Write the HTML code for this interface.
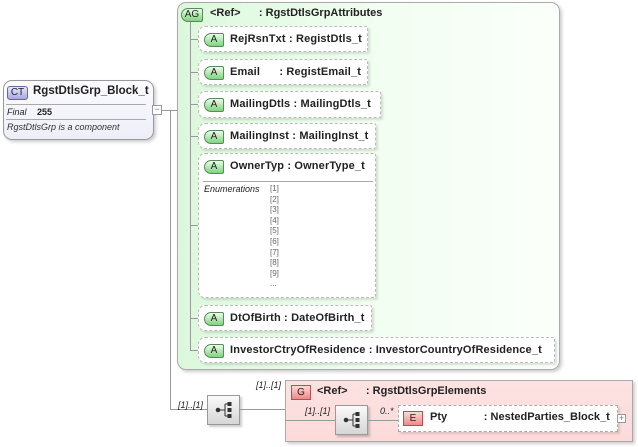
<!DOCTYPE html>
<html><head><style>
*{margin:0;padding:0;box-sizing:border-box}
body{width:638px;height:447px;background:#fff;position:relative;overflow:hidden;font-family:"Liberation Sans",sans-serif;font-size:11px;color:#222}
.a{position:absolute}
.attr{position:absolute;left:198px;border:1px dashed #bbb;border-radius:7px 2px 2px 7px;background:#fff;box-shadow:2px 2px 2px rgba(0,0,0,.12)}
.attr .t{position:absolute;left:31px;top:6px;font-weight:bold;font-size:11px;white-space:pre;letter-spacing:0.15px}
.badge{position:absolute;left:5px;top:6px;width:20px;height:14px;border:1px solid #5a8a5a;border-radius:7px 2px 2px 7px;background:linear-gradient(#e8ffe8,#7fd27f);font-size:10px;text-align:center;line-height:12px;color:#222}
.hl{position:absolute;height:1px;background:#999}
.vl{position:absolute;width:1px;background:#999}
.seq{position:absolute;width:33px;height:30px;border:1px solid #999;background:linear-gradient(#fafafa,#d6d6d6);box-shadow:2px 2px 2px rgba(0,0,0,.2)}
.i{font-style:italic;font-size:9px;position:absolute;white-space:pre}
</style></head><body>
<div class="a" style="left:3px;top:80px;width:151px;height:60px;border:1px solid #999;border-radius:9px;background:linear-gradient(#fbfbff,#eeeef8);box-shadow:2px 2px 3px rgba(0,0,0,.2)"></div>
<div class="a" style="left:7px;top:86px;width:21px;height:14px;border:1px solid #66a;border-radius:3px;background:linear-gradient(#e6e6ff,#a8a8e0);font-size:10px;text-align:center;line-height:12px">CT</div>
<div class="a" style="left:33px;top:85px;font-weight:bold;font-size:11.5px">RgstDtlsGrp_Block_t</div>
<div class="hl" style="left:6px;top:104px;width:140px;background:#aaa"></div>
<div class="a" style="left:7px;top:107px;font-style:italic;font-size:9px">Final</div>
<div class="a" style="left:37px;top:107px;font-weight:bold;font-size:9px">255</div>
<div class="hl" style="left:6px;top:119px;width:140px;background:#aaa"></div>
<div class="a" style="left:7px;top:122px;font-style:italic;font-size:9px;color:#333">RgstDtlsGrp is a component</div>
<div class="a" style="left:152px;top:105px;width:10px;height:10px;border:1px solid #999;background:#fff;font-size:9px;line-height:7px;text-align:center;color:#777">−</div>
<div class="hl" style="left:162px;top:110px;width:8px"></div>
<div class="vl" style="left:170px;top:110px;height:300px"></div>
<div class="hl" style="left:170px;top:409px;width:37px"></div>
<div class="hl" style="left:170px;top:110px;width:7px"></div>
<div class="a" style="left:177px;top:2px;width:383px;height:368px;border:1px solid #aaa;border-radius:9px;background:linear-gradient(90deg,#dcf8dc,#f2fef2 55%,#fbfffb);box-shadow:2px 2px 3px rgba(0,0,0,.2)"></div>
<div class="a" style="left:181px;top:8px;width:22px;height:14px;border:1px solid #5a8a5a;border-radius:7px 2px 2px 7px;background:linear-gradient(#e8ffe8,#7fd27f);font-size:10px;text-align:center;line-height:12px">AG</div>
<div class="a" style="left:210px;top:7px;font-weight:bold;font-size:11px;white-space:pre">&lt;Ref&gt;      : RgstDtlsGrpAttributes</div>
<div class="vl" style="left:190px;top:22px;height:328px"></div>
<div class="hl" style="left:190px;top:39px;width:8px"></div>
<div class="hl" style="left:190px;top:72px;width:8px"></div>
<div class="hl" style="left:190px;top:104px;width:8px"></div>
<div class="hl" style="left:190px;top:136px;width:8px"></div>
<div class="hl" style="left:190px;top:225px;width:8px"></div>
<div class="hl" style="left:190px;top:318px;width:8px"></div>
<div class="hl" style="left:190px;top:350px;width:8px"></div>

<div class="attr" style="top:26px;width:170px;height:26px"><div class="badge">A</div><div class="t">RejRsnTxt : RegistDtls_t</div></div>
<div class="attr" style="top:59px;width:170px;height:26px"><div class="badge">A</div><div class="t">Email      : RegistEmail_t</div></div>
<div class="attr" style="top:91px;width:183px;height:27px"><div class="badge">A</div><div class="t">MailingDtls : MailingDtls_t</div></div>
<div class="attr" style="top:123px;width:178px;height:26px"><div class="badge">A</div><div class="t">MailingInst : MailingInst_t</div></div>
<div class="attr" style="top:153px;width:178px;height:145px"><div class="badge">A</div><div class="t">OwnerTyp : OwnerType_t</div>
<div class="hl" style="left:4px;top:27px;width:170px;background:#aaa"></div>
<div class="i" style="left:5px;top:30px">Enumerations</div>
<div class="a" style="left:71px;top:30px;font-size:8px;line-height:10.6px;color:#666">[1]<br>[2]<br>[3]<br>[4]<br>[5]<br>[6]<br>[7]<br>[8]<br>[9]<br>...</div>
</div>
<div class="attr" style="top:305px;width:174px;height:26px"><div class="badge">A</div><div class="t">DtOfBirth : DateOfBirth_t</div></div>
<div class="attr" style="top:337px;width:357px;height:26px"><div class="badge">A</div><div class="t">InvestorCtryOfResidence : InvestorCountryOfResidence_t</div></div>

<div class="i" style="left:178px;top:400px">[1]..[1]</div>
<div class="seq" style="left:207px;top:395px"><svg width="31" height="28"><g fill="#333" stroke="#333"><circle cx="10" cy="14" r="1.8"/><line x1="10" y1="14" x2="17" y2="14"/><line x1="17" y1="8" x2="17" y2="20"/><line x1="17" y1="8" x2="21" y2="8"/><line x1="17" y1="20" x2="21" y2="20"/><rect x="20" y="6.5" width="3" height="3"/><rect x="20" y="12.5" width="3" height="3"/><rect x="20" y="18.5" width="3" height="3"/></g></svg></div>
<div class="hl" style="left:240px;top:409px;width:45px"></div>
<div class="i" style="left:256px;top:380px">[1]..[1]</div>
<div class="a" style="left:285px;top:380px;width:348px;height:62px;border:1px solid #aaa;background:linear-gradient(#fde2e2,#fcdada);box-shadow:2px 2px 3px rgba(0,0,0,.2)"></div>
<div class="a" style="left:291px;top:385px;width:20px;height:15px;border:1px solid #a55;background:linear-gradient(#ffd8d8,#f08888);font-size:10px;text-align:center;line-height:13px">G</div>
<div class="a" style="left:317px;top:385px;font-weight:bold;font-size:11px;white-space:pre">&lt;Ref&gt;      : RgstDtlsGrpElements</div>
<div class="hl" style="left:285px;top:420px;width:50px"></div>
<div class="i" style="left:305px;top:406px">[1]..[1]</div>
<div class="seq" style="left:335px;top:405px"><svg width="31" height="28"><g fill="#333" stroke="#333"><circle cx="10" cy="14" r="1.8"/><line x1="10" y1="14" x2="17" y2="14"/><line x1="17" y1="8" x2="17" y2="20"/><line x1="17" y1="8" x2="21" y2="8"/><line x1="17" y1="20" x2="21" y2="20"/><rect x="20" y="6.5" width="3" height="3"/><rect x="20" y="12.5" width="3" height="3"/><rect x="20" y="18.5" width="3" height="3"/></g></svg></div>
<div class="hl" style="left:368px;top:420px;width:30px"></div>
<div class="i" style="left:380px;top:406px">0..*</div>
<div class="a" style="left:398px;top:405px;width:220px;height:27px;border:1px dashed #aaa;background:#fff;box-shadow:2px 2px 2px rgba(0,0,0,.12)"></div>
<div class="a" style="left:403px;top:411px;width:20px;height:15px;border:1px solid #a55;background:linear-gradient(#ffd8d8,#f08888);font-size:10px;text-align:center;line-height:13px">E</div>
<div class="a" style="left:430px;top:411px;font-weight:bold;font-size:11px;white-space:pre">Pty            : NestedParties_Block_t</div>
<div class="a" style="left:617px;top:414px;width:9px;height:9px;border:1px solid #999;background:#fff;font-size:9px;line-height:7px;text-align:center;color:#777">+</div>
</body></html>
